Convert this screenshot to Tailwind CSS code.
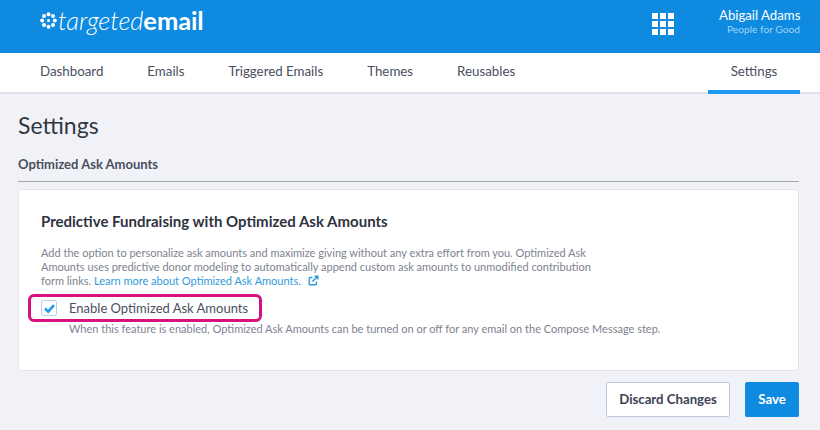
<!DOCTYPE html>
<html>
<head>
<meta charset="utf-8">
<script src="https://cdn.jsdelivr.net/npm/@tailwindcss/browser@4"></script>
</head>
<body class="m-0 h-[430px] w-[820px] overflow-hidden bg-[#f0f2f7] font-['Lato','Open_Sans',sans-serif]">
<header class="flex h-[53px] items-start justify-between bg-[#0e8ae0] text-white">
  <div class="ml-[40px] mt-[7px] flex items-center">
    <svg class="mr-[1px] mt-[1px] h-[17px] w-[17px]" viewBox="0 0 17 17" fill="#fff">
      <circle cx="8.5" cy="2.3" r="2"/><circle cx="13" cy="4" r="2"/><circle cx="14.8" cy="8.5" r="2"/><circle cx="13" cy="13" r="2"/><circle cx="8.5" cy="14.7" r="2"/><circle cx="4" cy="13" r="2"/><circle cx="2.2" cy="8.5" r="2"/><circle cx="4" cy="4" r="2"/><circle cx="8.5" cy="8.5" r="1.5"/>
    </svg>
    <span class="text-[25.5px] leading-[26px] tracking-[-0.1px]"><span class="font-light italic">targeted</span><span class="font-bold">email</span></span>
  </div>
  <div class="flex items-start">
    <div class="mt-[13px] grid grid-cols-3 gap-[2px]">
      <i class="block h-[6px] w-[6px] bg-white"></i><i class="block h-[6px] w-[6px] bg-white"></i><i class="block h-[6px] w-[6px] bg-white"></i>
      <i class="block h-[6px] w-[6px] bg-white"></i><i class="block h-[6px] w-[6px] bg-white"></i><i class="block h-[6px] w-[6px] bg-white"></i>
      <i class="block h-[6px] w-[6px] bg-white"></i><i class="block h-[6px] w-[6px] bg-white"></i><i class="block h-[6px] w-[6px] bg-white"></i>
    </div>
    <div class="ml-[45px] mr-[20px] mt-[7px] w-[81px] text-right">
      <div class="whitespace-nowrap text-[13.2px] leading-[16px]">Abigail Adams</div>
      <div class="whitespace-nowrap text-[10.2px] leading-[13px] text-[#9fd3f7]">People for Good</div>
    </div>
  </div>
</header>
<nav class="flex h-[41px] items-stretch justify-between border-b-2 border-[#dde1ec] bg-white text-[13.3px] text-[#4a4f5e]">
  <div class="ml-[40px] flex gap-[44px]">
    <span class="pt-[9px]">Dashboard</span>
    <span class="pt-[9px]">Emails</span>
    <span class="pt-[9px]">Triggered Emails</span>
    <span class="pt-[9px]">Themes</span>
    <span class="pt-[9px]">Reusables</span>
  </div>
  <div class="mr-[20px] mb-[-2px] flex h-[41px] w-[92px] justify-center border-b-[4px] border-[#1e9bf0] pt-[9px]">Settings</div>
</nav>
<main class="pl-[18px] pr-[21px]">
  <h1 class="mt-[16px] text-[23px] leading-[30px] text-[#33363f]">Settings</h1>
  <h2 class="mt-[16px] border-b border-[#a4a6ad] pb-[8px] text-[13px] font-bold leading-[17px] text-[#4a4f5e]">Optimized Ask Amounts</h2>
  <section class="mt-[7px] h-[182px] rounded-[2px] border border-[#e2e5ee] bg-white pl-[22px] pt-[20px]">
    <h3 class="text-[15px] font-bold leading-[22px] text-[#2f3340]">Predictive Fundraising with Optimized Ask Amounts</h3>
    <p class="mt-[14px] w-[565px] text-[11px] leading-[14px] text-[#7d8290]">Add the option to personalize ask amounts and maximize giving without any extra effort from you. Optimized Ask Amounts uses predictive donor modeling to automatically append custom ask amounts to unmodified contribution form links. <a class="text-[#2f9bdc]">Learn more about Optimized Ask Amounts.</a><svg class="ml-[7px] inline h-[11px] w-[11px] align-[-1px]" viewBox="0 0 11 11" fill="none" stroke="#2f9bdc" stroke-width="1.4"><path d="M8.5 6.5v2.3a1 1 0 0 1-1 1H2.2a1 1 0 0 1-1-1V3.5a1 1 0 0 1 1-1h2.3"/><path d="M4.5 6.5L9.5 1.5M6.5 1.2h3.3v3.3" stroke-width="1.6"/></svg></p>
    <div class="ml-[-13px] mt-[6px] flex h-[28px] w-[234px] items-center rounded-[6px] border-[3px] border-[#d6127f] pl-[10px]">
      <span class="flex h-[16px] w-[16px] items-center justify-center rounded-[2px] border border-[#c3cde0] bg-white">
        <svg class="h-[11px] w-[11px]" viewBox="0 0 11 11" fill="none" stroke="#1e9bf0" stroke-width="2.6"><path d="M1 5.5L4.2 8.6L10 2.2"/></svg>
      </span>
      <span class="ml-[12px] pt-[1px] text-[13px] text-[#4a4f5e]">Enable Optimized Ask Amounts</span>
    </div>
    <p class="ml-[28px] text-[11px] leading-[14px] text-[#7d8290]">When this feature is enabled, Optimized Ask Amounts can be turned on or off for any email on the Compose Message step.</p>
  </section>
  <div class="mt-[11px] flex justify-end gap-[15px]">
    <button class="h-[35px] w-[124px] rounded-[2px] border border-[#bcc7dc] bg-white text-[13.2px] font-bold text-[#3d4254]">Discard Changes</button>
    <button class="h-[35px] w-[54px] rounded-[2px] bg-[#0e8ae0] text-[13.2px] font-bold text-white">Save</button>
  </div>
</main>
</body>
</html>
